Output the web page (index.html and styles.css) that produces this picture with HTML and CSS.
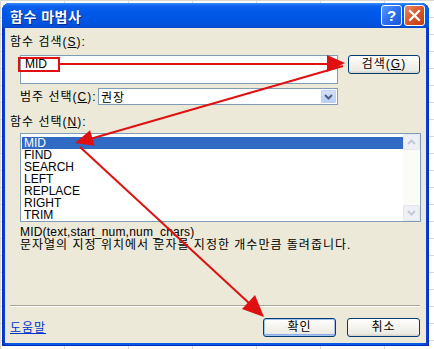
FILE: index.html
```html
<!DOCTYPE html>
<html lang="ko">
<head>
    <meta charset="UTF-8">
    <title>함수 마법사</title>
    <link rel="stylesheet" href="styles.css">
</head>
<body>
    <div class="window">
        <!-- Title bar -->
        <div class="titlebar">
            <span class="title">함수 마법사</span>
            <div class="caption-btns">
                <span class="cap help">?</span>
                <span class="cap close">
                    <svg width="13" height="13" viewBox="0 0 13 13"><path d="M2 2 L11 11 M11 2 L2 11" stroke="#fff" stroke-width="2.2" stroke-linecap="square"/></svg>
                </span>
            </div>
        </div>

        <div class="client">
            <div class="label ko">함수 검색(<u>S</u>):</div>

            <div class="search-row">
                <div class="search-box">MID</div>
                <button class="btn btn-search ko">검색(<u>G</u>)</button>
            </div>

            <div class="cat-row">
                <span class="cat-label ko">범주 선택(<u>C</u>):</span>
                <div class="combo">
                    <span class="combo-value ko">권장</span>
                    <span class="drop">
                        <svg width="9" height="6" viewBox="0 0 9 6"><path d="M1 1 L4.5 4.5 L8 1" fill="none" stroke="#4d6185" stroke-width="2"/></svg>
                    </span>
                </div>
            </div>

            <div class="label label-list ko">함수 선택(<u>N</u>):</div>

            <div class="listbox">
                <ul class="items">
                    <li class="selected">MID</li>
                    <li>FIND</li>
                    <li>SEARCH</li>
                    <li>LEFT</li>
                    <li>REPLACE</li>
                    <li>RIGHT</li>
                    <li>TRIM</li>
                </ul>
                <div class="scrollbar">
                    <span class="sb-btn">
                        <svg width="9" height="6" viewBox="0 0 9 6"><path d="M1 5 L4.5 1.5 L8 5" fill="none" stroke="#c3c8d4" stroke-width="2"/></svg>
                    </span>
                    <span class="sb-btn">
                        <svg width="9" height="6" viewBox="0 0 9 6"><path d="M1 1 L4.5 4.5 L8 1" fill="none" stroke="#c3c8d4" stroke-width="2"/></svg>
                    </span>
                </div>
            </div>

            <div class="syntax">MID(text,start_num,num_chars)</div>
            <div class="desc ko">문자열의 지정 위치에서 문자를 지정한 개수만큼 돌려줍니다.</div>

            <div class="sep"></div>

            <div class="footer">
                <a href="#" class="help-link ko">도움말</a>
                <div class="footer-btns">
                    <button class="btn btn-default ko">확인</button>
                    <button class="btn ko">취소</button>
                </div>
            </div>
        </div>
    </div>

    <!-- Red annotation marks drawn over the dialog -->
    <svg class="marks" width="434" height="349" viewBox="0 0 434 349">
        <g fill="#e01010" stroke="#e01010">
            <rect x="19" y="58" width="40" height="13" fill="none" stroke-width="2"/>
            <line x1="59" y1="64" x2="330" y2="64" stroke-width="2"/>
            <polygon points="345,63 327,55 327,72" stroke="none"/>
            <line x1="343" y1="66" x2="90" y2="139" stroke-width="2"/>
            <polygon points="75,143 94.5,145.7 90.1,130.3" stroke="none"/>
            <line x1="80" y1="147" x2="250" y2="304" stroke-width="2"/>
            <polygon points="264,317 242,309 255,295" stroke="none"/>
        </g>
    </svg>
</body>
</html>
```

FILE: styles.css
```css
body {
    margin: 0;
    width: 434px;
    height: 349px;
    overflow: hidden;
    font-family: "Liberation Sans", "Noto Sans CJK KR", sans-serif;
    font-size: 12px;
    color: #000;
    /* Excel sheet grid behind the dialog */
    background-color: #fff;
    background-image:
        linear-gradient(#d8d8d8 1px, transparent 1px),
        linear-gradient(90deg, #d8d8d8 1px, transparent 1px);
    background-size: 64px 17px;
}

/* Korean text is set a little wider, like Gulim */
.ko {
    letter-spacing: 1px;
}

.window {
    margin: 3px 0 0 2px;
    width: 427px;
    height: 343px;
    box-sizing: border-box;
    padding: 0 3px 3px 3px;
    border-radius: 8px 8px 0 0;
    background: linear-gradient(90deg, #0831d0 0%, #0a5ae8 2%, #0a5ae8 98%, #0831d0 100%);
    box-shadow: inset 0 0 0 1px #0030b8;
}

/* Title bar */
.titlebar {
    height: 25px;
    display: flex;
    align-items: center;
    justify-content: space-between;
    margin: 0 -3px;
    padding: 0 4px 0 8px;
    border-radius: 8px 8px 0 0;
    background: linear-gradient(#3b8df8 0%, #0b61ee 12%, #0058e8 40%, #0055e3 70%, #024fd9 92%, #0a46c8 100%);
}

.title {
    color: #fff;
    font-weight: bold;
    font-size: 14px;
    letter-spacing: 0.5px;
    text-shadow: 1px 1px 0 #0a2a8a;
}

.caption-btns {
    display: flex;
    gap: 2px;
}

.cap {
    width: 21px;
    height: 21px;
    box-sizing: border-box;
    border: 1px solid #fff;
    border-radius: 3px;
    display: flex;
    align-items: center;
    justify-content: center;
    color: #fff;
    font-weight: bold;
    font-size: 15px;
}

.help {
    background: linear-gradient(135deg, #5b9af8 0%, #2d6ff0 50%, #1a58d8 100%);
}

.close {
    background: linear-gradient(135deg, #e88c6a 0%, #d9552b 50%, #c03a12 100%);
}

/* Dialog body */
.client {
    height: 315px;
    box-sizing: border-box;
    padding: 7px 5px 0 5px;
    background-color: #ece9d8;
}

.label {
    line-height: 14px;
}

.label-list {
    margin-top: 10px;
}

.search-row {
    display: flex;
    align-items: flex-start;
    margin-top: 6px;
    padding-left: 10px;
}

.search-box {
    width: 318px;
    height: 29px;
    box-sizing: border-box;
    border: 1px solid #7f9db9;
    background-color: #fff;
    padding: 1px 4px;
    line-height: 14px;
}

.btn {
    height: 19px;
    width: 73px;
    padding: 0;
    box-sizing: border-box;
    border: 1px solid #003c74;
    border-radius: 3px;
    background: linear-gradient(#ffffff 0%, #f6f5f0 40%, #ecebe5 85%, #d6d0c5 100%);
    font-family: "Liberation Sans", "Noto Sans CJK KR", sans-serif;
    font-size: 12px;
    line-height: 15px;
    color: #000;
}

.btn-search {
    margin-left: 10px;
    width: 72px;
}

.btn-default {
    box-shadow: inset 0 0 0 1px #a6c3ef, inset 0 -1px 0 1px #8cb0ea;
}

.cat-row {
    display: flex;
    align-items: center;
    margin-top: 4px;
    padding-left: 10px;
}

.cat-label {
    width: 78px;
    line-height: 14px;
}

.combo {
    width: 240px;
    height: 17px;
    box-sizing: border-box;
    border: 1px solid #7f9db9;
    background-color: #fff;
    display: flex;
    align-items: center;
    justify-content: space-between;
    padding: 0 1px 0 2px;
}

.drop {
    width: 15px;
    height: 13px;
    border-radius: 2px;
    background: linear-gradient(#d6e3fd, #b7cdf8);
    box-shadow: inset 0 0 0 1px #c0d2f6;
    display: flex;
    align-items: center;
    justify-content: center;
}

/* Function list */
.listbox {
    margin: 4px 0 0 10px;
    width: 401px;
    height: 89px;
    box-sizing: border-box;
    border: 1px solid #7f9db9;
    background-color: #fff;
    display: flex;
}

.items {
    flex: 1;
    list-style: none;
    margin: 0;
    padding: 3px 0 0 1px;
}

.items li {
    height: 12px;
    line-height: 12px;
    padding-left: 2px;
    font-size: 12px;
}

.items li.selected {
    background-color: #316ac5;
    color: #fff;
}

.scrollbar {
    width: 17px;
    display: flex;
    flex-direction: column;
    justify-content: space-between;
    background-color: #fbfbf8;
}

.sb-btn {
    height: 16px;
    box-sizing: border-box;
    border: 1px solid #e3e6ee;
    border-radius: 2px;
    background-color: #eef0f5;
    display: flex;
    align-items: center;
    justify-content: center;
}

.syntax {
    margin-top: 4px;
    padding-left: 10px;
    line-height: 13px;
    letter-spacing: 0.2px;
}

.desc {
    padding-left: 10px;
    line-height: 13px;
}

.sep {
    margin: 53px 1px 0 0;
    border-top: 1px solid #aca899;
    border-bottom: 1px solid #fff;
}

.footer {
    display: flex;
    align-items: center;
    justify-content: space-between;
    margin-top: 11px;
    padding-right: 1px;
}

.help-link {
    color: #0033cc;
    text-decoration: underline;
    line-height: 14px;
}

.footer-btns {
    display: flex;
    gap: 11px;
}

/* Annotation overlay */
.marks {
    position: absolute;
    top: 0;
    left: 0;
    pointer-events: none;
}
```
